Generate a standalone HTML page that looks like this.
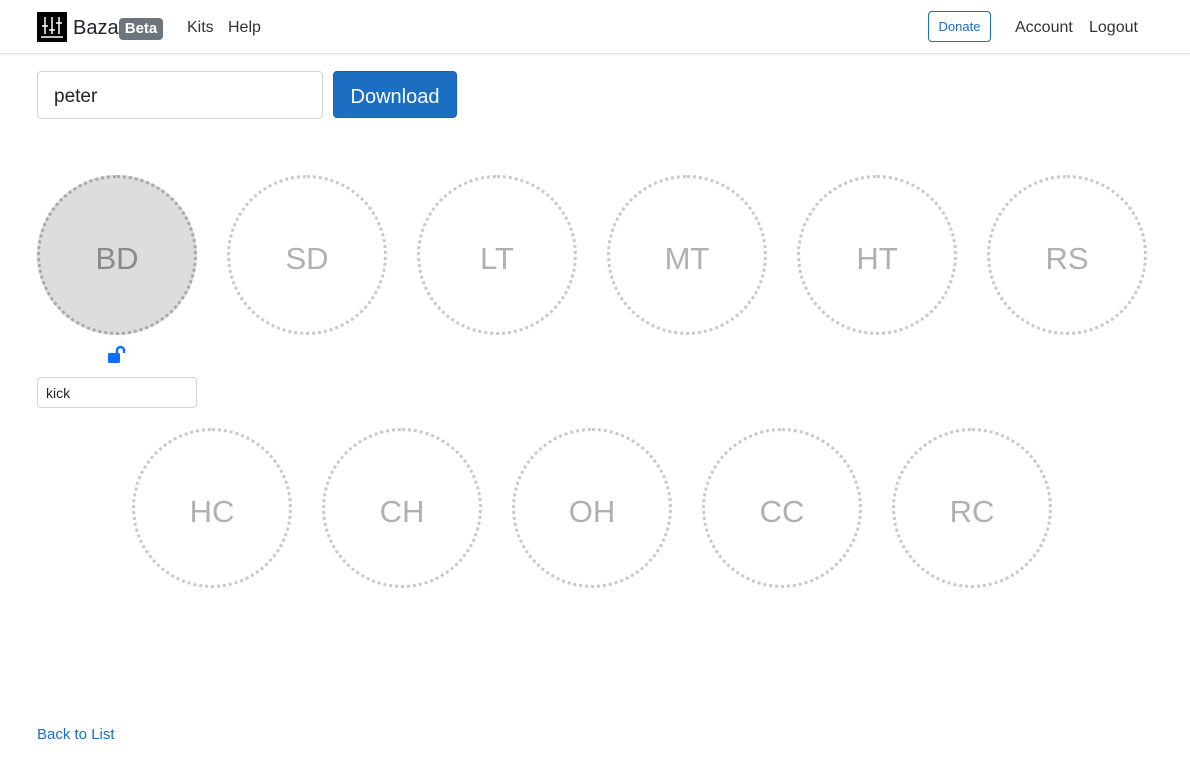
<!DOCTYPE html>
<html><head><style>
body{margin:0;width:1190px;height:774px;background:#fff;font-family:"Segoe UI","Liberation Sans",sans-serif;color:#212529;position:relative;overflow:hidden}
.nav{position:absolute;left:0;top:0;width:1190px;height:53px;border-bottom:1px solid #e2e2e2;box-shadow:0 1px 3px rgba(0,0,0,.05)}
.a{position:absolute;font-size:16px;color:#212529}
.c{position:absolute;width:154px;height:154px;border:3px dotted #c9c9c9;border-radius:50%;display:flex;align-items:center;justify-content:center;font-size:31px;color:#b0b0b0;box-sizing:content-box}
.c span{position:relative;top:4px}
</style></head><body>
<div class="nav">
<svg style="position:absolute;left:37px;top:12px" width="30" height="30" viewBox="0 0 30 30"><rect width="30" height="30" fill="#000"/><g stroke="#fff" stroke-width="1.5"><line x1="8" y1="5" x2="8" y2="22"/><line x1="15" y1="5" x2="15" y2="22"/><line x1="22" y1="5" x2="22" y2="22"/><line x1="4" y1="25" x2="26" y2="25"/><line x1="5" y1="14" x2="11" y2="14"/><line x1="12" y1="18" x2="18" y2="18"/><line x1="19" y1="11" x2="25" y2="11"/></g></svg>
<div class="a" style="left:73px;top:17px;font-size:20px">Baza</div>
<div style="position:absolute;left:119px;top:18px;width:44px;height:22px;background:#6c757d;border-radius:4px;color:#fff;font-weight:bold;font-size:15px;text-align:center;line-height:22px">Beta</div>
<div class="a" style="left:187px;top:19px;color:#333">Kits</div>
<div class="a" style="left:228px;top:19px;color:#333">Help</div>
<div style="position:absolute;left:928px;top:11px;width:61px;height:29px;border:1px solid #1b6ec2;border-radius:4px;color:#1b6ec2;font-size:13px;text-align:center;line-height:29px">Donate</div>
<div class="a" style="left:1015px;top:19px;color:#333">Account</div>
<div class="a" style="left:1089px;top:19px;color:#333">Logout</div>
</div>
<div style="position:absolute;left:37px;top:71px;border:1px solid #ced4da;border-radius:4px;font-size:19px;line-height:50px;padding-left:16px;box-sizing:border-box;width:286px;height:48px">peter</div>
<div style="position:absolute;left:333px;top:71px;width:124px;height:47px;background:#1b6ec2;border:1px solid #1861ac;box-sizing:border-box;border-radius:4px;color:#fff;font-size:20px;text-align:center;line-height:51px">Download</div>
<div class="c" style="left:37px;top:175px;background:#ddd;border-color:#a8a8a8;color:#8a8a8a"><span>BD</span></div>
<div class="c" style="left:227px;top:175px"><span>SD</span></div>
<div class="c" style="left:417px;top:175px"><span>LT</span></div>
<div class="c" style="left:607px;top:175px"><span>MT</span></div>
<div class="c" style="left:797px;top:175px"><span>HT</span></div>
<div class="c" style="left:987px;top:175px"><span>RS</span></div>
<svg style="position:absolute;left:107px;top:345px" width="20" height="19" viewBox="0 0 20 19"><rect x="1" y="8" width="12" height="10" rx="1.5" fill="#0d6efd"/><path d="M10 9V5.5a3.5 3.5 0 0 1 7 0V8" fill="none" stroke="#0d6efd" stroke-width="2.4"/></svg>
<div style="position:absolute;left:37px;top:377px;width:160px;height:31px;border:1px solid #ced4da;border-radius:4px;box-sizing:border-box;font-size:14px;line-height:31px;padding-left:8px">kick</div>
<div class="c" style="left:132px;top:428px"><span>HC</span></div>
<div class="c" style="left:322px;top:428px"><span>CH</span></div>
<div class="c" style="left:512px;top:428px"><span>OH</span></div>
<div class="c" style="left:702px;top:428px"><span>CC</span></div>
<div class="c" style="left:892px;top:428px"><span>RC</span></div>
<div class="a" style="left:37px;top:726px;color:#1b6ec2;font-size:15px">Back to List</div>
</body></html>
